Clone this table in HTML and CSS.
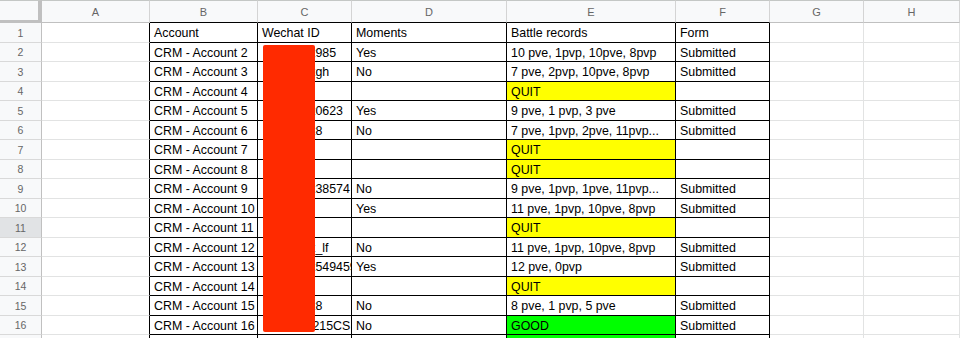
FILE: index.html
```html
<!DOCTYPE html>
<html>
<head>
<meta charset="utf-8">
<link rel="stylesheet" href="styles.css">
</head>
<body>
<div class="sheet">
  <div class="grid">
    <div class="corner"></div>
    <div class="h">A</div><div class="h hb">B</div><div class="h hb">C</div><div class="h hb">D</div><div class="h hb">E</div><div class="h hb">F</div><div class="h">G</div><div class="h">H</div>

    <div class="rn">1</div><div class="c a"></div><div class="c b">Account</div><div class="c b">Wechat ID</div><div class="c b">Moments</div><div class="c b">Battle records</div><div class="c b">Form</div><div class="c"></div><div class="c"></div>

    <div class="rn">2</div><div class="c a"></div><div class="c b">CRM - Account 2</div><div class="c b id">xx985</div><div class="c b">Yes</div><div class="c b">10 pve, 1pvp, 10pve, 8pvp</div><div class="c b">Submitted</div><div class="c"></div><div class="c"></div>

    <div class="rn">3</div><div class="c a"></div><div class="c b">CRM - Account 3</div><div class="c b id">xxgh</div><div class="c b">No</div><div class="c b">7 pve, 2pvp, 10pve, 8pvp</div><div class="c b">Submitted</div><div class="c"></div><div class="c"></div>

    <div class="rn">4</div><div class="c a"></div><div class="c b">CRM - Account 4</div><div class="c b"></div><div class="c b"></div><div class="c b quit">QUIT</div><div class="c b"></div><div class="c"></div><div class="c"></div>

    <div class="rn">5</div><div class="c a"></div><div class="c b">CRM - Account 5</div><div class="c b id">xx0623</div><div class="c b">Yes</div><div class="c b">9 pve, 1 pvp, 3 pve</div><div class="c b">Submitted</div><div class="c"></div><div class="c"></div>

    <div class="rn">6</div><div class="c a"></div><div class="c b">CRM - Account 6</div><div class="c b id">xx8</div><div class="c b">No</div><div class="c b">7 pve, 1pvp, 2pve, 11pvp...</div><div class="c b">Submitted</div><div class="c"></div><div class="c"></div>

    <div class="rn">7</div><div class="c a"></div><div class="c b">CRM - Account 7</div><div class="c b"></div><div class="c b"></div><div class="c b quit">QUIT</div><div class="c b"></div><div class="c"></div><div class="c"></div>

    <div class="rn">8</div><div class="c a"></div><div class="c b">CRM - Account 8</div><div class="c b"></div><div class="c b"></div><div class="c b quit">QUIT</div><div class="c b"></div><div class="c"></div><div class="c"></div>

    <div class="rn">9</div><div class="c a"></div><div class="c b">CRM - Account 9</div><div class="c b id">xx38574</div><div class="c b">No</div><div class="c b">9 pve, 1pvp, 1pve, 11pvp...</div><div class="c b">Submitted</div><div class="c"></div><div class="c"></div>

    <div class="rn">10</div><div class="c a"></div><div class="c b">CRM - Account 10</div><div class="c b"></div><div class="c b">Yes</div><div class="c b">11 pve, 1pvp, 10pve, 8pvp</div><div class="c b">Submitted</div><div class="c"></div><div class="c"></div>

    <div class="rn sel">11</div><div class="c a"></div><div class="c b">CRM - Account 11</div><div class="c b"></div><div class="c b"></div><div class="c b quit">QUIT</div><div class="c b"></div><div class="c"></div><div class="c"></div>

    <div class="rn">12</div><div class="c a"></div><div class="c b">CRM - Account 12</div><div class="c b id">xx_lf</div><div class="c b">No</div><div class="c b">11 pve, 1pvp, 10pve, 8pvp</div><div class="c b">Submitted</div><div class="c"></div><div class="c"></div>

    <div class="rn">13</div><div class="c a"></div><div class="c b">CRM - Account 13</div><div class="c b id">xx549459</div><div class="c b">Yes</div><div class="c b">12 pve, 0pvp</div><div class="c b">Submitted</div><div class="c"></div><div class="c"></div>

    <div class="rn">14</div><div class="c a"></div><div class="c b">CRM - Account 14</div><div class="c b"></div><div class="c b"></div><div class="c b quit">QUIT</div><div class="c b"></div><div class="c"></div><div class="c"></div>

    <div class="rn">15</div><div class="c a"></div><div class="c b">CRM - Account 15</div><div class="c b id">xx8</div><div class="c b">No</div><div class="c b">8 pve, 1 pvp, 5 pve</div><div class="c b">Submitted</div><div class="c"></div><div class="c"></div>

    <div class="rn">16</div><div class="c a"></div><div class="c b">CRM - Account 16</div><div class="c b id id2">xx215CS</div><div class="c b">No</div><div class="c b good">GOOD</div><div class="c b">Submitted</div><div class="c"></div><div class="c"></div>

    <div class="rn"></div><div class="c a"></div><div class="c b"></div><div class="c b"></div><div class="c b"></div><div class="c b good"></div><div class="c b"></div><div class="c"></div><div class="c"></div>
  </div>
  <div class="redact"></div>
</div>
</body>
</html>
```
FILE: styles.css
```css
html, body {
  margin: 0;
  padding: 0;
  background: #ffffff;
  overflow: hidden;
}
body {
  width: 960px;
  height: 338px;
}
.sheet {
  position: relative;
  width: 960px;
  height: 338px;
  overflow: hidden;
  font-family: "Liberation Sans", Arial, sans-serif;
}
.grid {
  display: grid;
  grid-template-columns: 42px 108px 108px 94px 155px 169px 94px 94px 96px;
  grid-template-rows: 23px repeat(17, 19.5px);
}
.grid > div {
  box-sizing: border-box;
  overflow: hidden;
  white-space: nowrap;
}
.corner {
  background: #f8f9fa;
  border-top: 1px solid #c4c7c5;
  border-right: 4px solid #c0c0c0;
  border-bottom: 3px solid #c0c0c0;
}
.h {
  background: #f8f9fa;
  border-top: 1px solid #c4c7c5;
  border-right: 1px solid #d4d4d4;
  border-bottom: 1px solid #c0c0c0;
  color: #666666;
  font-size: 11px;
  padding-top: 1px;
  display: flex;
  align-items: center;
  justify-content: center;
}
.h.hb {
  border-bottom-color: #000000;
}
.rn {
  background: #f8f9fa;
  border-right: 1px solid #c0c0c0;
  border-bottom: 1px solid #d9d9d9;
  color: #666666;
  font-size: 10.5px;
  padding-top: 1px;
  display: flex;
  align-items: center;
  justify-content: center;
}
.rn.sel {
  background: #e1e3e5;
}
.c {
  border-right: 1px solid #e2e3e3;
  border-bottom: 1px solid #e2e3e3;
  font-size: 12.4px;
  color: #000000;
  padding: 2px 3px 0 4px;
  display: flex;
  align-items: center;
}
.c.a {
  border-right-color: #000000;
}
.c.b {
  border-right-color: #000000;
  border-bottom-color: #000000;
}
.c.id {
  padding-left: 45px;
}
.c.id2 {
  padding-left: 42px;
}
.quit {
  background: #ffff00;
}
.good {
  background: #00ff00;
}
.redact {
  position: absolute;
  left: 263px;
  top: 45px;
  width: 52px;
  height: 287px;
  background: #ff2a00;
  border-radius: 2px;
}
```
